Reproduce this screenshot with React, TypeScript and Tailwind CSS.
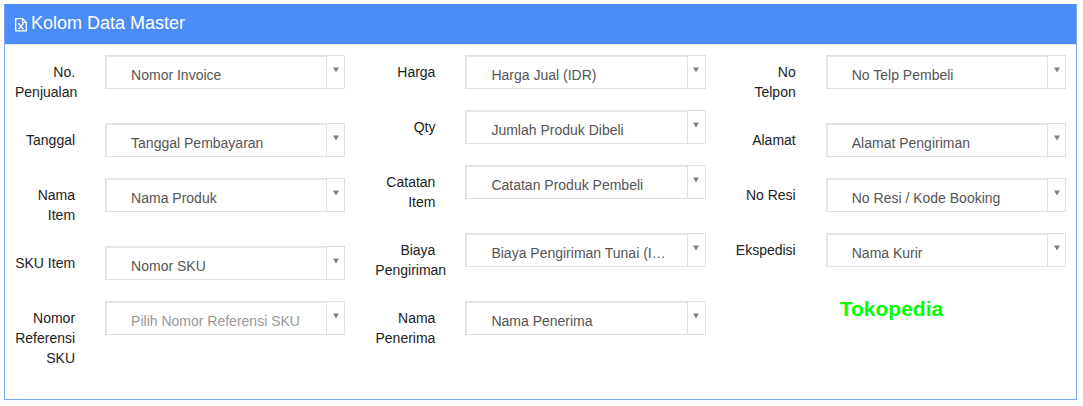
import React, { useId } from "react";

type Field = { label: string; value: string; placeholder?: boolean };

const columns: Field[][] = [
  [
    { label: "No. Penjualan", value: "Nomor Invoice" },
    { label: "Tanggal", value: "Tanggal Pembayaran" },
    { label: "Nama Item", value: "Nama Produk" },
    { label: "SKU Item", value: "Nomor SKU" },
    { label: "Nomor Referensi SKU", value: "Pilih Nomor Referensi SKU", placeholder: true },
  ],
  [
    { label: "Harga", value: "Harga Jual (IDR)" },
    { label: "Qty", value: "Jumlah Produk Dibeli" },
    { label: "Catatan Item", value: "Catatan Produk Pembeli" },
    { label: "Biaya Pengiriman", value: "Biaya Pengiriman Tunai (IDR)" },
    { label: "Nama Penerima", value: "Nama Penerima" },
  ],
  [
    { label: "No Telpon", value: "No Telp Pembeli" },
    { label: "Alamat", value: "Alamat Pengiriman" },
    { label: "No Resi", value: "No Resi / Kode Booking" },
    { label: "Ekspedisi", value: "Nama Kurir" },
  ],
];

function FileExcelIcon() {
  return (
    <svg viewBox="0 0 12 14" className="h-[14px] w-3" fill="none" stroke="white" aria-hidden="true">
      <path d="M.7 .7H7.6L11.3 4.4V12.8H.7Z" strokeWidth="1.3" />
      <path d="M7.5 .8V4.5H11.2" strokeWidth="1.1" />
      <path d="M4 6L7.6 10.6M7.8 6L4.2 10.6" strokeWidth="1.4" />
      <path d="M3 5.9H5M7 5.9H9M3 10.7H5M7 10.7H9" strokeWidth="1" />
    </svg>
  );
}

function FieldRow({ label, value, placeholder }: Field) {
  const id = useId();
  return (
    <div className="grid grid-cols-4">
      <label htmlFor={id} className="px-[15px] pt-[7px] text-right leading-5 text-[#222]">
        {label}
      </label>
      <div className="col-span-3 px-[15px]">
        <div className="relative border border-[#e2e2e2]">
          <select
            id={id}
            className={
              "block h-8 w-full appearance-none truncate border-t border-l border-[#e8e8e8] bg-white pt-[5px] pr-8 pl-6 " +
              (placeholder ? "text-[#999]" : "text-[#555]")
            }
          >
            <option>{value}</option>
          </select>
          <span className="pointer-events-none absolute inset-y-0 right-0 flex w-[18px] justify-center border-l border-[#e2e2e2] bg-white pt-[11px]">
            <svg viewBox="0 0 6 6" className="size-[6px]" fill="#808080" aria-hidden="true">
              <path d="M0 .5H6L3 5.5Z" />
            </svg>
          </span>
        </div>
      </div>
    </div>
  );
}

export default function App() {
  return (
    <main className="bg-white pt-1 pr-[6px] pb-[6px] pl-1 font-['Liberation_Sans',Arial,sans-serif] text-sm">
      <section className="border border-[#7aa7f2] pb-[31px]">
        <header className="-mt-px flex h-[41px] items-center gap-1 border-b border-[#e5e5e5] bg-[#4a8df8] bg-clip-padding pb-[2px] pl-[10px] text-white">
          <span className="pt-1">
            <FileExcelIcon />
          </span>
          <h1 className="text-lg leading-6">Kolom Data Master</h1>
        </header>
        <form className="-mx-[5px] grid grid-cols-3 pt-[10px]">
          {columns.map((fields, i) => (
            <div key={i} className="flex flex-col gap-[21px]">
              {fields.map((field) => (
                <FieldRow key={field.label} {...field} />
              ))}
              {i === 2 && (
                <div className="grid grid-cols-4">
                  <strong className="col-span-3 col-start-2 pt-[9px] pl-[29px] text-[21px] leading-6 text-[#00ff00]">
                    Tokopedia
                  </strong>
                </div>
              )}
            </div>
          ))}
        </form>
      </section>
    </main>
  );
}
